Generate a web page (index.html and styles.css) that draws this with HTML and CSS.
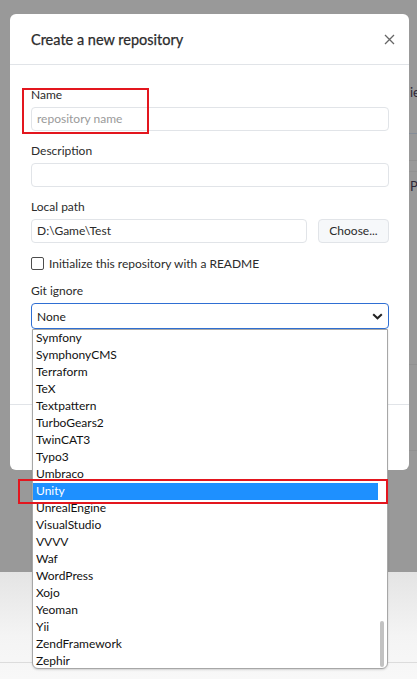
FILE: index.html
```html
<!DOCTYPE html>
<html>
<head>
<meta charset="utf-8">
<link rel="stylesheet" href="styles.css">
</head>
<body>
<div class="screen">
  <div class="page-strip">
    <span class="strip-text t1">ie</span>
    <span class="strip-line l1"></span>
    <span class="strip-line l2"></span>
    <span class="strip-line l3"></span>
    <span class="strip-text t2">P</span>
    <span class="strip-line l4"></span>
    <span class="strip-line l5"></span>
  </div>
  <div class="modal">
    <div class="modal-header">
      <h1 class="title">Create a new repository</h1>
      <svg class="close" width="11" height="11" viewBox="0 0 11 11"><path d="M1 1L10 10M10 1L1 10" stroke="#666" stroke-width="1.3" fill="none"/></svg>
    </div>
    <div class="modal-body">
      <div class="group">
        <label class="label">Name</label>
        <div class="input placeholder">repository name</div>
      </div>
      <div class="group">
        <label class="label">Description</label>
        <div class="input"></div>
      </div>
      <div class="group">
        <label class="label">Local path</label>
        <div class="path-row">
          <div class="input path">D:\Game\Test</div>
          <div class="button">Choose...</div>
        </div>
      </div>
      <div class="check-row">
        <span class="checkbox"></span>
        <span class="check-label">Initialize this repository with a README</span>
      </div>
      <div class="group">
        <label class="label">Git ignore</label>
        <div class="select">
          <span>None</span>
          <svg class="chev" width="11" height="7" viewBox="0 0 11 7"><path d="M1.2 1.2L5.5 5.3L9.8 1.2" stroke="#222" stroke-width="2" fill="none"/></svg>
        </div>
      </div>
    </div>
    <div class="modal-footer"></div>
  </div>
</div>
<div class="below"><span class="below-line"></span></div>

<div class="dropdown">
  <div class="options">
    <div class="opt">Symfony</div>
    <div class="opt">SymphonyCMS</div>
    <div class="opt">Terraform</div>
    <div class="opt">TeX</div>
    <div class="opt">Textpattern</div>
    <div class="opt">TurboGears2</div>
    <div class="opt">TwinCAT3</div>
    <div class="opt">Typo3</div>
    <div class="opt">Umbraco</div>
    <div class="opt selected">Unity</div>
    <div class="opt">UnrealEngine</div>
    <div class="opt">VisualStudio</div>
    <div class="opt">VVVV</div>
    <div class="opt">Waf</div>
    <div class="opt">WordPress</div>
    <div class="opt">Xojo</div>
    <div class="opt">Yeoman</div>
    <div class="opt">Yii</div>
    <div class="opt">ZendFramework</div>
    <div class="opt">Zephir</div>
  </div>
  <div class="scrolltrack"><span class="thumb"></span></div>
</div>

<div class="mark mark-name"></div>
<div class="mark mark-unity"></div>
</body>
</html>
```

FILE: styles.css
```css
* { box-sizing: border-box; }
html, body { margin: 0; padding: 0; }
body {
  width: 417px;
  height: 679px;
  overflow: hidden;
  font-family: Lato, "Noto Sans", sans-serif;
  font-size: 12px;
  color: #2b2b2b;
  position: relative;
  background: #f2f2f2;
}
.screen {
  height: 572px;
  background: #999999;
  position: relative;
  padding: 14px 8px 0 10px;
}
.page-strip {
  position: absolute;
  left: 409px;
  top: 0;
  width: 8px;
  height: 572px;
  overflow: hidden;
}
.strip-text {
  position: absolute;
  left: 1px;
  font-size: 13px;
  color: #2e2838;
  line-height: 16px;
}
.t1 { top: 84px; }
.t2 { top: 178px; }
.strip-line {
  position: absolute;
  left: 0;
  width: 8px;
  height: 1px;
  background: #8a9099;
}
.l1 { top: 133px; background: #858d98; }
.l2 { top: 160px; background: #8f8f8f; }
.l3 { top: 171px; background: #929292; }
.l4 { top: 364px; background: #919191; }
.l5 { top: 450px; background: #919191; }

.modal {
  width: 399px;
  height: 456px;
  background: #fff;
  border-radius: 6px;
  position: relative;
  display: flex;
  flex-direction: column;
}
.modal-header {
  height: 51px;
  border-bottom: 1px solid #e1e4e8;
  display: flex;
  align-items: center;
  justify-content: space-between;
  padding: 0 14px 0 21px;
}
.title {
  margin: 0;
  font-size: 14.5px;
  font-weight: 400;
  color: #2b2b2b;
  -webkit-text-stroke: 0.25px #2b2b2b;
}
.close { display: block; }
.modal-body {
  padding: 22px 20px 0 21px;
  height: 339px;
  display: flex;
  flex-direction: column;
  gap: 12px;
}
.group { display: flex; flex-direction: column; gap: 4px; }
.label { line-height: 16px; color: #2b2b2b; }
.input {
  height: 24px;
  border: 1px solid #e1e4e8;
  border-radius: 4px;
  padding: 0 5px;
  line-height: 22px;
  color: #2b2b2b;
  background: #fff;
}
.placeholder { color: #9a9a9a; }
.path-row { display: flex; gap: 11px; }
.path { flex: 1; }
.button {
  width: 71px;
  height: 24px;
  border: 1px solid #e1e4e8;
  border-radius: 4px;
  background: #f6f8fa;
  line-height: 22px;
  text-align: center;
  color: #2b2b2b;
}
.check-row {
  display: flex;
  align-items: center;
  gap: 5px;
  height: 16px;
}
.checkbox {
  width: 13px;
  height: 13px;
  border: 1px solid #4d4d4d;
  border-radius: 2px;
  background: #fff;
}
.select {
  height: 26px;
  border: 1px solid #2f6fd3;
  border-radius: 4px;
  display: flex;
  align-items: center;
  justify-content: space-between;
  padding: 0 5px 0 5px;
  color: #1a1a1a;
}
.chev { display: block; }
.modal-footer {
  flex: 1;
  border-top: 1px solid #e1e4e8;
}
.below {
  height: 107px;
  background: linear-gradient(#e4e4e4, #f4f4f4 60%, #f8f8f8);
  position: relative;
}
.below-line {
  position: absolute;
  left: 0;
  right: 0;
  top: 90px;
  height: 1px;
  background: #dcdcdc;
}
.dropdown {
  position: absolute;
  left: 32px;
  top: 329px;
  width: 356px;
  height: 340px;
  background: #fff;
  border: 1px solid #a7a7a7;
  border-radius: 0 0 6px 6px;
  display: flex;
  overflow: hidden;
  box-shadow: 0 1px 2px rgba(0,0,0,0.15);
}
.options { width: 345px; }
.opt {
  height: 17px;
  line-height: 16px;
  padding-left: 3px;
  color: #111;
  white-space: nowrap;
}
.opt.selected { background: #1e90ff; color: #fff; }
.scrolltrack {
  flex: 1;
  position: relative;
}
.thumb {
  position: absolute;
  left: 2px;
  top: 291px;
  width: 4px;
  height: 46px;
  border-radius: 2px;
  background: #c2c2c2;
}
.mark {
  position: absolute;
  border: 2px solid #e3161e;
}
.mark-name { left: 22px; top: 88px; width: 127px; height: 46px; }
.mark-unity { left: 18px; top: 479px; width: 370px; height: 25px; }
```
